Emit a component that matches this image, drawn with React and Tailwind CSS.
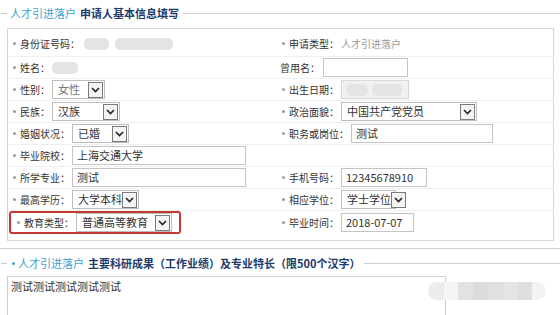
import React from 'react'

const Dot = () => <span className="inline-block w-[3px] h-[3px] rounded-full bg-[#9a9a9a] mr-[4px] shrink-0" />

const Arrow = () => (
  <span className="ml-auto w-[15px] h-[16px] border border-[#7a7a7a] bg-[#f4f4f4] flex items-center justify-center shrink-0">
    <svg width="9" height="6" viewBox="0 0 9 6">
      <path d="M1 1 L4.5 4.5 L8 1" fill="none" stroke="#222" strokeWidth="1.6" />
    </svg>
  </span>
)

const Select = ({ value, className }) => (
  <div className={`h-[19px] border border-[#bdbdbd] bg-white flex items-center pl-[5px] pr-[1px] text-[11px] text-[#333] ${className}`}>
    <span className="whitespace-nowrap">{value}</span>
    <Arrow />
  </div>
)

const Input = ({ value, className }) => (
  <div className={`h-[19px] border border-[#c4c4c4] bg-white flex items-center pl-[4px] text-[11px] text-[#333] whitespace-nowrap ${className}`}>
    {value}
  </div>
)

const Blur = ({ className }) => <span className={`inline-block h-[12px] rounded-[5px] bg-[#e4e4e4] ${className}`} />

const Label = ({ text, dot = true }) => (
  <span className="flex items-center whitespace-nowrap text-[10px] text-[#333] mr-[2px]">
    {dot && <Dot />}
    {text}
  </span>
)

export default function App() {
  const rows = [
    [
      <div className="flex items-center pl-[5px]"><Label text="身份证号码：" /><Blur className="w-[25px] ml-[2px]" /><Blur className="w-[58px] ml-[6px]" /></div>,
      <div className="flex items-center pl-[2px]"><Label text="申请类型：" /><span className="text-[10px] text-[#999]">人才引进落户</span></div>,
    ],
    [
      <div className="flex items-center pl-[5px]"><Label text="姓名：" /><Blur className="w-[26px]" /></div>,
      <div className="flex items-center"><Label text="曾用名：" dot={false} /><Input className="w-[85px] ml-[1px]" /></div>,
    ],
    [
      <div className="flex items-center pl-[5px]"><Label text="性别：" /><Select value="女性" className="w-[53px] text-[#777]" /></div>,
      <div className="flex items-center pl-[2px]"><Label text="出生日期：" /><div className="w-[68px] h-[19px] border border-[#d8d8d8] bg-[#f1f1f1] flex items-center pl-[4px]"><Blur className="w-[22px] bg-[#d9d9d9]" /><Blur className="w-[30px] ml-[4px] bg-[#dddddd]" /></div></div>,
    ],
    [
      <div className="flex items-center pl-[5px]"><Label text="民族：" /><Select value="汉族" className="w-[68px]" /></div>,
      <div className="flex items-center pl-[2px]"><Label text="政治面貌：" /><Select value="中国共产党党员" className="w-[136px]" /></div>,
    ],
    [
      <div className="flex items-center pl-[5px]"><Label text="婚姻状况：" /><Select value="已婚" className="w-[57px]" /></div>,
      <div className="flex items-center pl-[2px]"><Label text="职务或岗位：" /><Input value="测试" className="w-[142px]" /></div>,
    ],
    [
      <div className="flex items-center pl-[5px]"><Label text="毕业院校：" /><Input value="上海交通大学" className="w-[174px]" /></div>,
      <div />,
    ],
    [
      <div className="flex items-center pl-[5px]"><Label text="所学专业：" /><Input value="测试" className="w-[174px]" /></div>,
      <div className="flex items-center pl-[2px]"><Label text="手机号码：" /><Input value="12345678910" className="w-[86px]" /></div>,
    ],
    [
      <div className="flex items-center pl-[5px]"><Label text="最高学历：" /><Select value="大学本科" className="w-[67px]" /></div>,
      <div className="flex items-center pl-[2px]"><Label text="相应学位：" /><Select value="学士学位" className="w-[55px] pl-[3px]" /></div>,
    ],
    [
      <div className="flex items-center h-full py-[0px] pl-[1px]">
        <div className="flex items-center w-[172px] h-[23px] border-2 border-[#c33a35] rounded-[3px] pl-[6px]">
          <Label text="教育类型：" /><Select value="普通高等教育" className="w-[96px]" />
        </div>
      </div>,
      <div className="flex items-center pl-[2px]"><Label text="毕业时间：" /><Input value="2018-07-07" className="w-[73px]" /></div>,
    ],
  ]

  return (
    <div className="w-[560px] h-[315px] overflow-hidden bg-white relative" style={{ fontFamily: '"Noto Sans CJK SC", "Noto Sans", sans-serif' }}>
      <div className="flex items-center h-[28px] pb-[1px]">
        <span className="w-[6px] h-px bg-[#c8c8c8] ml-[1px]" />
        <span className="ml-[3px] text-[11px] text-[#3ea2cd]">人才引进落户</span>
        <span className="ml-[4px] text-[11px] font-bold text-[#203a6c]">申请人基本信息填写</span>
        <span className="flex-1 h-px bg-[#cfcfcf] ml-[4px]" />
      </div>

      <div className="ml-[7px] mr-[6px] border border-[#d6d6d6] pt-[2px] pb-[7px]">
        {rows.map((r, i) => (
          <div key={i} className={`grid grid-cols-[272px_1fr] border-b border-[#efefef] ${i === 0 ? 'h-[26px]' : 'h-[22px]'} ${i === 8 ? 'border-b-0' : ''}`}>
            {r[0]}
            {r[1]}
          </div>
        ))}
      </div>

      <div className="h-px bg-[#cfcfcf] mt-[7px]" />

      <div className="flex items-center h-[26px] mt-[1px]">
        <span className="w-[6px] h-px bg-[#c8c8c8] ml-[1px]" />
        <span className="ml-[5px] w-[3px] h-[3px] rounded-full bg-[#3ea2cd]" />
        <span className="ml-[3px] text-[11px] text-[#3ea2cd]">人才引进落户</span>
        <span className="ml-[4px] text-[11px] font-semibold text-[#203a6c]">主要科研成果（工作业绩）及专业特长（限500个汉字）</span>
        <span className="flex-1 h-px bg-[#cfcfcf] ml-[4px]" />
      </div>

      <div className="ml-[7px] w-[439px] h-[60px] border border-[#cfcfcf] pl-[3px] pt-[1px] text-[11px] text-[#333]">
        测试测试测试测试测试
      </div>

      <div className="absolute left-[428px] top-[282px] w-[118px] h-[18px] rounded-[9px] bg-[#f3f3f3] flex items-center overflow-hidden">
        <span className="w-[16px] h-full bg-[#ececec]" />
        <span className="w-[14px] h-full bg-[#f5f5f5]" />
        <span className="w-[15px] h-full bg-[#e2e2e2]" />
        <span className="w-[15px] h-full bg-[#dcdcdc]" />
        <span className="w-[15px] h-full bg-[#e0e0e0]" />
        <span className="w-[15px] h-full bg-[#e4e4e4]" />
        <span className="w-[14px] h-full bg-[#dedede]" />
      </div>
    </div>
  )
}
